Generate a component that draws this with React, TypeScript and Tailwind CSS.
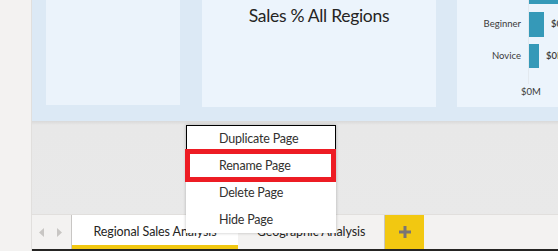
import React from "react";

const font = { fontFamily: '"Segoe UI", Lato, "Open Sans", sans-serif' };

export default function App() {
  return (
    <div className="relative flex h-[251px] w-[558px] overflow-hidden bg-[#f3f2f1]" style={font}>
      {/* left sidebar */}
      <div className="h-full w-[32px] shrink-0 border-r border-[#e1dfdd] bg-[#f3f2f1]" />
      {/* main column */}
      <div className="flex h-full flex-1 flex-col">
        {/* canvas */}
        <div className="flex h-[121px] shrink-0 items-start bg-[#dce9f5] pl-[14px]">
          <div className="h-[105px] w-[134px] shrink-0 bg-[#ebf3fb]" />
          <div className="ml-[22px] flex h-[107px] w-[234px] shrink-0 justify-center bg-[#ecf4fc] pt-[4px]">
            <span className="text-[17.5px] leading-[24px] tracking-[-0.3px] text-[#252423]">Sales % All Regions</span>
          </div>
          <div className="ml-[21px] h-[107px] flex-1 bg-[#ecf4fc]">
            <div className="relative h-full w-full">
              <div className="absolute left-[71px] top-0 h-[84px] w-px bg-[#e3e9ef]" />
              <div className="absolute left-[72px] top-0 h-[4px] w-[30px] bg-[#3599b8]" />
              <div className="absolute left-0 top-[12px] flex h-[25px] items-center">
                <span className="w-[64px] text-right text-[9.5px] text-[#3b3a39]">Beginner</span>
                <div className="ml-[8px] h-[25px] w-[15px] bg-[#3599b8]" />
                <span className="ml-[7px] text-[9.5px] font-semibold text-[#3b3a39]">$0</span>
              </div>
              <div className="absolute left-0 top-[44px] flex h-[24px] items-center">
                <span className="w-[64px] text-right text-[9.5px] text-[#3b3a39]">Novice</span>
                <div className="ml-[8px] h-[24px] w-[10px] bg-[#3599b8]" />
                <span className="ml-[7px] text-[9.5px] font-semibold text-[#3b3a39]">$0M</span>
              </div>
              <span className="absolute left-[64px] top-[85px] text-[9.5px] text-[#3b3a39]">$0M</span>
            </div>
          </div>
        </div>
        {/* gray area */}
        <div className="flex-1 bg-[#e9e9e9] bg-gradient-to-b from-[#d9d9d9] via-[#e8e8e8] via-[4px] to-[#e9e9e9]" />
        {/* tab bar */}
        <div className="flex h-[37px] shrink-0 border-b-2 border-t border-b-[#252423] border-t-[#e1dfdd] bg-[#f3f2f1]">
          <div className="flex w-[40px] shrink-0 items-center justify-center gap-[13px] border-r border-[#c8c6c4] pr-[2px] pt-[1px]">
            <svg width="5" height="9" viewBox="0 0 5 9"><path d="M5 0 L0 4.5 L5 9 Z" fill="#c8c6c4" /></svg>
            <svg width="5" height="9" viewBox="0 0 5 9"><path d="M0 0 L5 4.5 L0 9 Z" fill="#c8c6c4" /></svg>
          </div>
          <div className="relative flex w-[166px] shrink-0 items-center justify-center bg-white pt-[1px]">
            <span className="text-[12.5px] tracking-[-0.1px] text-[#252423]">Regional Sales Analysis</span>
            <div className="absolute bottom-0 left-0 right-0 h-[4px] bg-[#f2c811]" />
          </div>
          <div className="flex w-[147px] shrink-0 items-center justify-center border-r border-[#c8c6c4] pt-[1px]">
            <span className="text-[12.5px] tracking-[-0.1px] text-[#252423]">Geographic Analysis</span>
          </div>
          <div className="flex w-[39px] shrink-0 items-center justify-center bg-[#f2c811]">
            <svg width="12" height="12" viewBox="0 0 12 12">
              <rect x="0" y="4.5" width="12" height="3" fill="#7a7574" />
              <rect x="4.5" y="0" width="3" height="12" fill="#7a7574" />
            </svg>
          </div>
        </div>
      </div>

      {/* context menu */}
      <div className="absolute left-[186px] top-[125px] w-[150px] bg-white text-[12.5px] tracking-[-0.2px] text-[#323130] shadow-[0_0_3px_rgba(0,0,0,0.25)]">
        <div className="flex h-[26px] items-center border border-black pl-[32px] pt-[3px]">Duplicate Page</div>
        <div className="flex h-[27px] items-center pl-[33px] pt-[3px]">Rename Page</div>
        <div className="flex h-[27px] items-center pl-[33px] pt-[3px]">Delete Page</div>
        <div className="flex h-[27px] items-center pl-[33px] pt-[3px]">Hide Page</div>
        <div className="h-[1px]" />
      </div>

      {/* red highlight */}
      <div className="absolute left-[185px] top-[149px] h-[33px] w-[151px] border-[5px] border-[#ed1c24]" />
    </div>
  );
}
